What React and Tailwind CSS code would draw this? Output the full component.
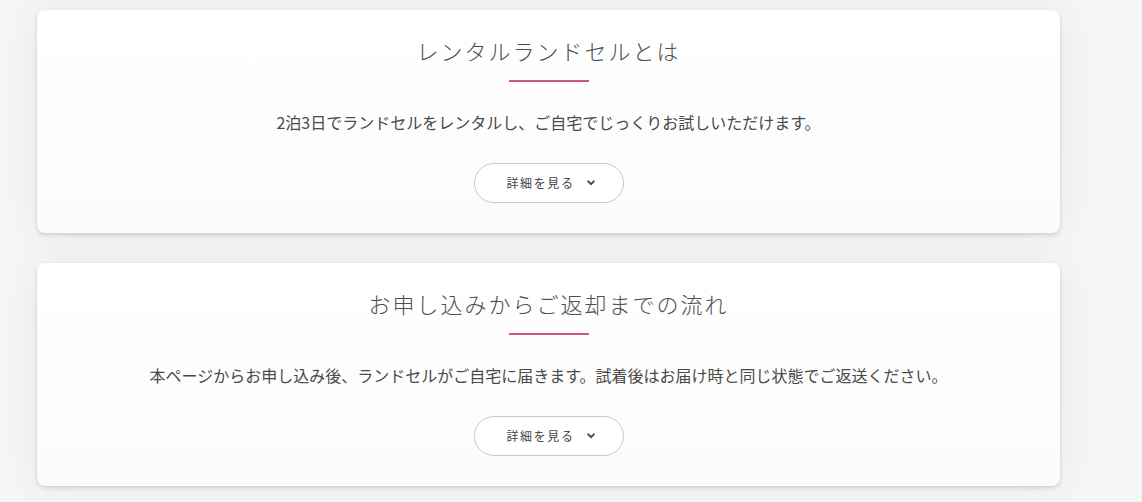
import React from "react";

const jp = { fontFamily: '"Noto Sans CJK JP", "Noto Sans", sans-serif' };

function Card({ title, body }) {
  return (
    <section className="flex flex-col items-center rounded-lg bg-white bg-gradient-to-b from-white to-[#fbfbfb] pt-[25px] pb-[30px] shadow-[0_2px_4px_rgba(0,0,0,0.14),0_0_40px_rgba(0,0,0,0.05)]">
      <h2 className="text-[22px] leading-[30px] tracking-[2px] font-light text-[#4f4f4f]" style={jp}>
        {title}
      </h2>
      <div className="mt-[15px] h-[2px] w-[80px] bg-[#cc5680]" />
      <p className="mt-[28px] text-[16px] leading-[24px] text-[#4a4a4a]" style={jp}>
        {body}
      </p>
      <button
        className="mt-[29px] flex h-[40px] w-[150px] items-center justify-center gap-[12px] rounded-full border border-[#c8c8c8] bg-white pl-[4px] text-[12px] tracking-[1.6px] text-[#444]"
        style={jp}
      >
        <span>詳細を見る</span>
        <svg width="8" height="6" viewBox="0 0 8 6" fill="none">
          <path d="M1.2 1.3 L4 4.2 L6.8 1.3" stroke="#444" strokeWidth="1.9" strokeLinecap="round" strokeLinejoin="round" />
        </svg>
      </button>
    </section>
  );
}

export default function App() {
  return (
    <div className="min-h-[502px] w-[1142px] bg-[#f5f5f5] pt-[10px] pb-[16px] pl-[37px]">
      <div className="flex w-[1023px] flex-col gap-[30px]">
        <Card
          title="レンタルランドセルとは"
          body="2泊3日でランドセルをレンタルし、ご自宅でじっくりお試しいただけます。"
        />
        <Card
          title="お申し込みからご返却までの流れ"
          body="本ページからお申し込み後、ランドセルがご自宅に届きます。試着後はお届け時と同じ状態でご返送ください。"
        />
      </div>
    </div>
  );
}
